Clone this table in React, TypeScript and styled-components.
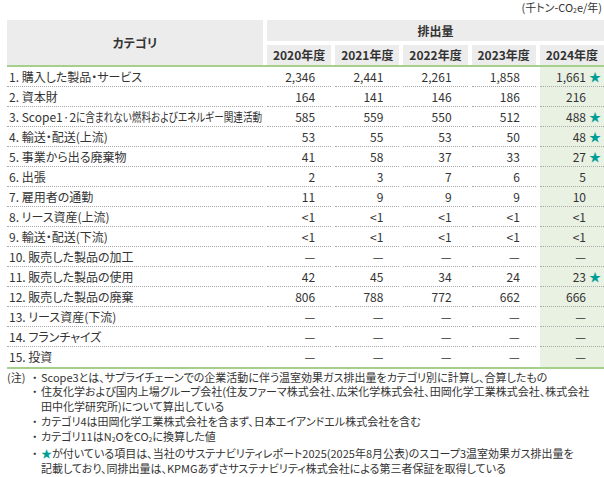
import React from 'react';
import styled, { createGlobalStyle } from 'styled-components';

const GlobalStyle = createGlobalStyle`
  html, body {
    margin: 0;
    padding: 0;
    background: #fff;
  }
  body {
    font-family: 'Noto Sans CJK JP', 'Noto Sans', sans-serif;
    font-feature-settings: 'palt';
    color: #333;
  }
`;

const GREEN_LINE = '#a5d08c';
const GREEN_BG = '#e9f1e3';
const HEAD_BG = '#ececec';
const STAR = '#009e96';
const COLUMNS = '256px repeat(5, 1fr)';

const Page = styled.div`
  width: 604px;
  padding-left: 7px;
  box-sizing: border-box;
`;

const Unit = styled.div`
  font-size: 11px;
  line-height: 14px;
  text-align: right;
  padding-right: 2px;
  margin-bottom: 3px;
`;

const Sub = styled.span`
  font-size: 0.62em;
  vertical-align: -0.1em;
`;

const HeaderGrid = styled.div`
  display: grid;
  grid-template-columns: ${COLUMNS};
  grid-template-rows: 21px 20px;
  column-gap: 4px;
  row-gap: 4px;
  border-bottom: 2px solid ${GREEN_LINE};
  font-size: 12px;
  font-weight: 700;
`;

const HeadCell = styled.div<{ $span?: 'rows' | 'cols' }>`
  background: ${HEAD_BG};
  display: flex;
  align-items: center;
  justify-content: center;
  grid-row: ${({ $span }) => ($span === 'rows' ? '1 / span 2' : 'auto')};
  grid-column: ${({ $span }) => ($span === 'cols' ? '2 / span 5' : 'auto')};
`;

const Body = styled.div`
  border-bottom: 2px solid ${GREEN_LINE};
`;

const Row = styled.div`
  display: grid;
  grid-template-columns: ${COLUMNS};
  column-gap: 4px;
  height: 20px;
  font-size: 12px;
`;

const CategoryCell = styled.div<{ $last?: boolean }>`
  padding-left: 2px;
  line-height: 19px;
  white-space: nowrap;
  overflow: hidden;
  border-bottom: ${({ $last }) => ($last ? 'none' : '1px dotted #a8a8a8')};
`;

const Condensed = styled.span`
  display: inline-block;
  transform: scaleX(0.8);
  transform-origin: left center;
`;

const ValueCell = styled.div<{ $last?: boolean; $highlight?: boolean }>`
  display: flex;
  align-items: center;
  justify-content: flex-end;
  padding-right: ${({ $highlight }) => ($highlight ? '3px' : '16px')};
  background: ${({ $highlight }) => ($highlight ? GREEN_BG : 'transparent')};
  border-bottom: ${({ $last }) => ($last ? 'none' : '1px dotted #a8a8a8')};
  line-height: 19px;
`;

const StarSlot = styled.span`
  width: 15px;
  text-align: right;
  color: ${STAR};
  font-size: 12px;
`;

const Notes = styled.div`
  display: flex;
  margin-top: 1px;
  font-size: 11px;
  line-height: 14.8px;
`;

const NoteLabel = styled.div`
  width: 28px;
  flex: none;
`;

const NoteList = styled.ul`
  list-style: none;
  margin: 0;
  padding: 0;
  flex: 1;
`;

const NoteItem = styled.li`
  display: flex;
`;

const Bullet = styled.span`
  width: 5px;
  flex: none;
  &::before {
    content: '・';
    display: inline-block;
    margin-left: -3px;
  }
`;

const NoteText = styled.span`
  padding-left: 1px;
`;

const Star = styled.span`
  color: ${STAR};
`;

type Item = {
  name: string;
  condensed?: string;
  values: string[];
  star?: boolean;
};

const rows: Item[] = [
  { name: '1. 購入した製品・サービス', values: ['2,346', '2,441', '2,261', '1,858', '1,661'], star: true },
  { name: '2. 資本財', values: ['164', '141', '146', '186', '216'] },
  {
    name: '3. Scope1·2',
    condensed: 'に含まれない燃料およびエネルギー関連活動',
    values: ['585', '559', '550', '512', '488'],
    star: true,
  },
  { name: '4. 輸送・配送(上流)', values: ['53', '55', '53', '50', '48'], star: true },
  { name: '5. 事業から出る廃棄物', values: ['41', '58', '37', '33', '27'], star: true },
  { name: '6. 出張', values: ['2', '3', '7', '6', '5'] },
  { name: '7. 雇用者の通勤', values: ['11', '9', '9', '9', '10'] },
  { name: '8. リース資産(上流)', values: ['<1', '<1', '<1', '<1', '<1'] },
  { name: '9. 輸送・配送(下流)', values: ['<1', '<1', '<1', '<1', '<1'] },
  { name: '10. 販売した製品の加工', values: ['—', '—', '—', '—', '—'] },
  { name: '11. 販売した製品の使用', values: ['42', '45', '34', '24', '23'], star: true },
  { name: '12. 販売した製品の廃棄', values: ['806', '788', '772', '662', '666'] },
  { name: '13. リース資産(下流)', values: ['—', '—', '—', '—', '—'] },
  { name: '14. フランチャイズ', values: ['—', '—', '—', '—', '—'] },
  { name: '15. 投資', values: ['—', '—', '—', '—', '—'] },
];

const years = ['2020年度', '2021年度', '2022年度', '2023年度', '2024年度'];

export default function App() {
  return (
    <>
      <GlobalStyle />
      <Page>
        <Unit>
          (千トン-CO<Sub>2</Sub>e/年)
        </Unit>
        <HeaderGrid>
          <HeadCell $span="rows">カテゴリ</HeadCell>
          <HeadCell $span="cols">排出量</HeadCell>
          {years.map((y) => (
            <HeadCell key={y}>{y}</HeadCell>
          ))}
        </HeaderGrid>
        <Body>
          {rows.map((r, i) => {
            const last = i === rows.length - 1;
            return (
              <Row key={r.name}>
                <CategoryCell $last={last}>
                  {r.name}
                  {r.condensed && <Condensed>{r.condensed}</Condensed>}
                </CategoryCell>
                {r.values.map((v, j) => {
                  const highlight = j === r.values.length - 1;
                  return (
                    <ValueCell key={j} $last={last} $highlight={highlight}>
                      {v}
                      {highlight && <StarSlot>{r.star ? '★' : ''}</StarSlot>}
                    </ValueCell>
                  );
                })}
              </Row>
            );
          })}
        </Body>
        <Notes>
          <NoteLabel>(注)</NoteLabel>
          <NoteList>
            <NoteItem>
              <Bullet />
              <NoteText>
                Scope3とは、サプライチェーンでの企業活動に伴う温室効果ガス排出量をカテゴリ別に計算し、合算したもの
              </NoteText>
            </NoteItem>
            <NoteItem>
              <Bullet />
              <NoteText>
                住友化学および国内上場グループ会社(住友ファーマ株式会社、広栄化学株式会社、田岡化学工業株式会社、株式会社
                <br />
                田中化学研究所)について算出している
              </NoteText>
            </NoteItem>
            <NoteItem>
              <Bullet />
              <NoteText>カテゴリ4は田岡化学工業株式会社を含まず、日本エイアンドエル株式会社を含む</NoteText>
            </NoteItem>
            <NoteItem>
              <Bullet />
              <NoteText>
                カテゴリ11はN<Sub>2</Sub>OをCO<Sub>2</Sub>に換算した値
              </NoteText>
            </NoteItem>
            <NoteItem>
              <Bullet />
              <NoteText>
                <Star>★</Star>
                が付いている項目は、当社のサステナビリティレポート2025(2025年8月公表)のスコープ3温室効果ガス排出量を
                <br />
                記載しており、同排出量は、KPMGあずさサステナビリティ株式会社による第三者保証を取得している
              </NoteText>
            </NoteItem>
          </NoteList>
        </Notes>
      </Page>
    </>
  );
}
